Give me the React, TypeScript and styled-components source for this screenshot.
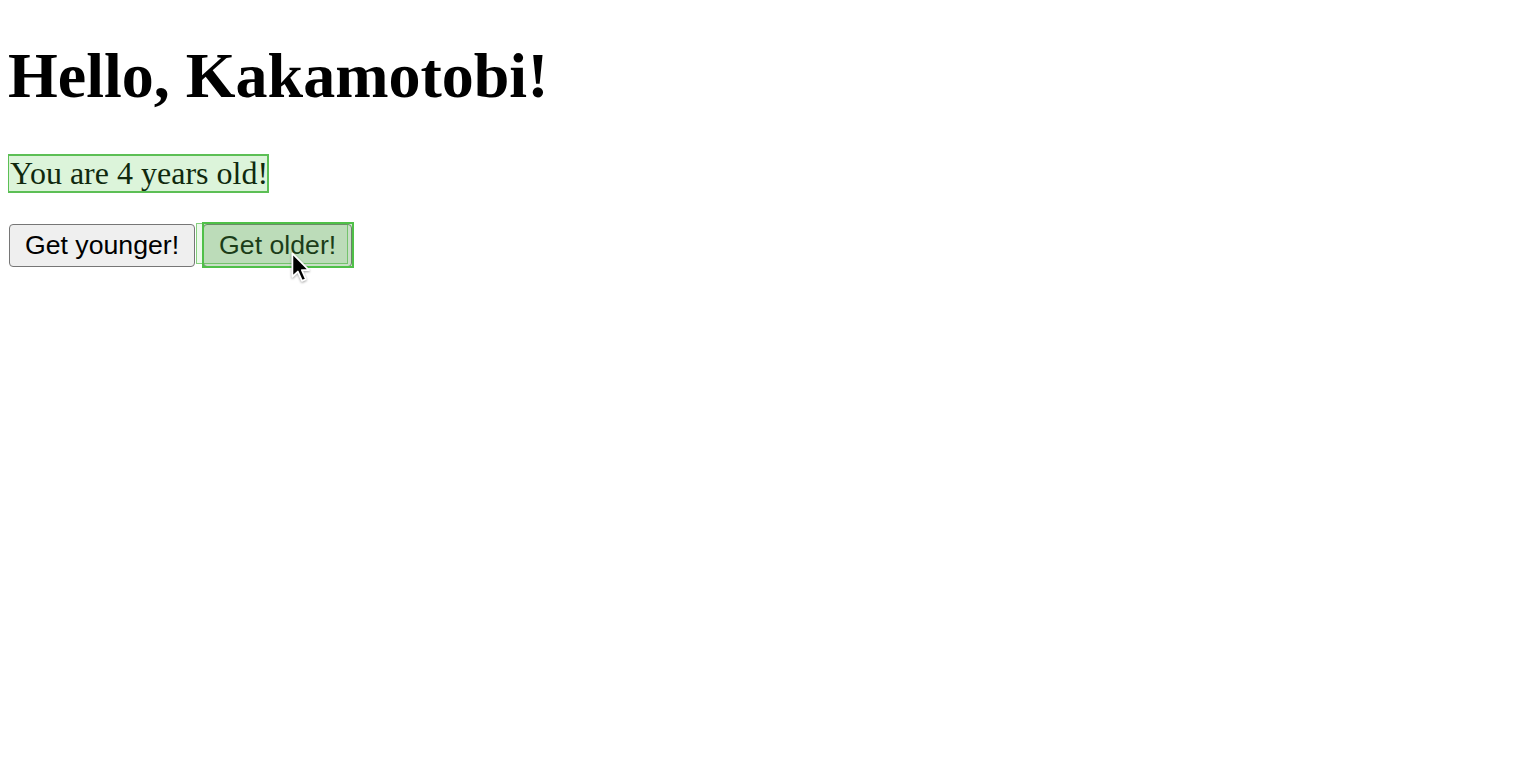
import React, { useState } from "react";
import styled, { createGlobalStyle } from "styled-components";

const Global = createGlobalStyle`
  html, body { background: #ffffff; }
  body { margin: 8px; font-family: "Liberation Serif", "Times New Roman", serif; color: #000; }
`;

const Page = styled.main`
  min-height: 600px;
  display: flow-root;
`;

const Title = styled.h1`
  font-family: "Liberation Serif", "Times New Roman", serif;
  font-size: 64px;
  font-weight: 700;
  margin: 31px 0 42px;
  line-height: normal;
`;

const Para = styled.p`
  font-size: 32px;
  margin: 0 0 32px;
  line-height: normal;
`;

const Highlight = styled.span`
  position: relative;
  display: inline-block;
  padding: 0 0 0 2px;
`;

const Overlay = styled.span<{ $strong?: boolean; $ghost?: boolean }>`
  position: absolute;
  pointer-events: none;
  inset: ${(p) => (p.$ghost ? "-1px 4px 3px -7px" : p.$strong ? "-2px -2px -1px -1px" : "-1px")};
  background: ${(p) =>
    p.$ghost ? "rgba(120, 210, 110, 0.14)" : p.$strong ? "rgba(70, 170, 60, 0.22)" : "rgba(80, 200, 70, 0.2)"};
  border: ${(p) => (p.$ghost ? "1px solid rgba(90, 190, 80, 0.7)" : "2px solid #5cbf55")};
  ${(p) => (p.$strong ? "border-color: #4fc048;" : "")}
`;

const Row = styled.div`
  display: flex;
  gap: 8px;
  align-items: flex-start;
  margin-left: 1px;
`;

const Slot = styled.div`
  position: relative;
  display: inline-flex;
`;

const Button = styled.button`
  height: 43px;
  padding: 0 15px;
  font-family: "Liberation Sans", Arial, sans-serif;
  font-size: 26.67px;
  color: #000;
  background: #efefef;
  border: 1.5px solid #767676;
  border-radius: 4px;
  cursor: default;
`;

const Cursor = styled.svg`
  position: absolute;
  left: 88px;
  top: 28px;
  width: 22px;
  height: 33px;
  pointer-events: none;
  overflow: visible;
  filter: drop-shadow(0 1px 1px rgba(0, 0, 0, 0.35));
`;

export default function App() {
  const [age, setAge] = useState(4);
  return (
    <Page>
      <Global />
      <Title>Hello, Kakamotobi!</Title>
      <Para>
        <Highlight>
          You are {age} years old!
          <Overlay />
        </Highlight>
      </Para>
      <Row>
        <Button onClick={() => setAge((a) => a - 1)}>Get younger!</Button>
        <Slot>
          <Overlay $ghost />
          <Button onClick={() => setAge((a) => a + 1)}>Get older!</Button>
          <Overlay $strong />
          <Cursor viewBox="0 0 16 24">
            <path
              d="M1 1 L1 18 L5 14.2 L8 21 L10.8 19.8 L7.9 13.2 L13 13.2 Z"
              fill="#000"
              stroke="#fff"
              strokeWidth="1.3"
              strokeLinejoin="round"
            />
          </Cursor>
        </Slot>
      </Row>
    </Page>
  );
}
